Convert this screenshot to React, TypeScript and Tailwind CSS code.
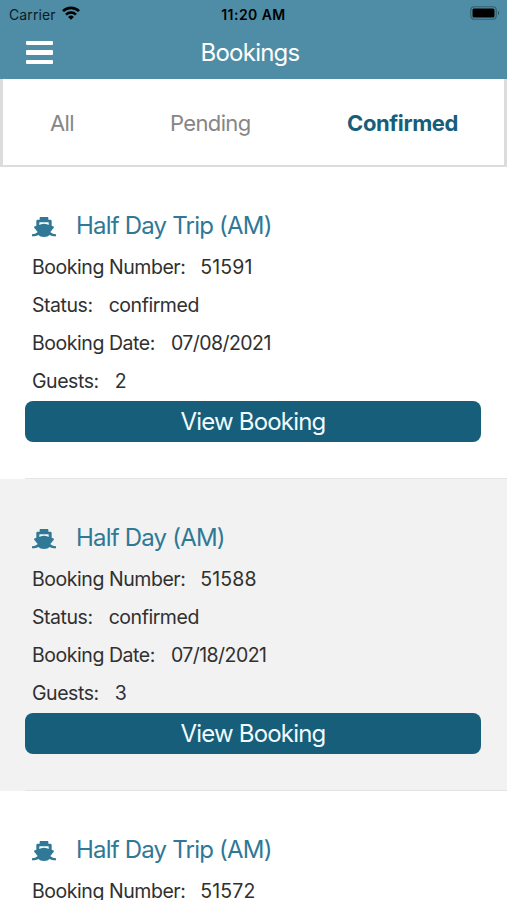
import clsx from "clsx";

interface Booking {
    title: string;
    number: string;
    status: string;
    date: string;
    guests: number;
}

const bookings: Booking[] = [
    {
        title: "Half Day Trip (AM)",
        number: "51591",
        status: "confirmed",
        date: "07/08/2021",
        guests: 2,
    },
    {
        title: "Half Day (AM)",
        number: "51588",
        status: "confirmed",
        date: "07/18/2021",
        guests: 3,
    },
    {
        title: "Half Day Trip (AM)",
        number: "51572",
        status: "confirmed",
        date: "07/18/2021",
        guests: 2,
    },
];

function ShipIcon() {
    return (
        <svg className="mt-[1.5px] h-[20px] w-[24px]" viewBox="0 0 72 60" fill="currentColor">
            {/* Funnel and cabin */}
            <path
                fillRule="evenodd"
                d="M25 0h22a2 2 0 0 1 2 2v6h6a4 4 0 0 1 4 4v18H13V12a4 4 0 0 1 4-4h6V2a2 2 0 0 1 2-2zM22 16v8l14-4 14 4v-8z"
            />
            {/* Hull and waves */}
            <path d="M36 20 63 27.500c3 1 3.500 3.500 1.800 5.500L55 45c3 3 8 6 17 7v6c-9 0-15-1.500-19-4-4 4-9 6-17 6s-13-2-17-6c-4 2.500-10 4-19 4v-6c9-1 14-4 17-7L7.200 33C5.500 31 6 28.500 9 27.500z" />
        </svg>
    );
}

function StatusBar() {
    return (
        <div className="grid h-7 grid-cols-[1fr_auto_1fr] items-center px-[9px] text-[14px] text-[#0b1a22]">
            <div className="flex items-center gap-[6px]">
                <span className="tracking-[0.1px]">Carrier</span>
                <svg
                    className="-mt-0.5 h-[14px] w-[18px]"
                    viewBox="0 0 18 14"
                    fill="none"
                    stroke="black"
                    strokeWidth="2.6"
                >
                    <path d="M1 5.2a11.3 11.3 0 0 1 16 0" />
                    <path d="M4 8.6a7.1 7.1 0 0 1 10 0" />
                    <path d="M9 13.8 6.1 10.9a4.1 4.1 0 0 1 5.8 0z" fill="black" stroke="none" />
                </svg>
            </div>
            <span className="font-semibold tracking-[0.45px] text-black">11:20 AM</span>
            <svg className="-mr-0.5 -mt-0.5 h-[14px] w-[30px] justify-self-end" viewBox="0 0 30 14">
                <rect x="0.75" y="0.75" width="25.5" height="12.5" rx="3.5" fill="none" stroke="#33606f" strokeWidth="1.2" />
                <rect x="2.5" y="2.5" width="22" height="9" rx="1.5" fill="black" />
                <path d="M28 5v4c1.6-.6 1.6-3.4 0-4z" fill="#2b5565" />
            </svg>
        </div>
    );
}

function Header() {
    return (
        <header className="h-[79px] bg-[#4f8da6]">
            <StatusBar />
            <div className="grid h-[49px] grid-cols-[1fr_auto_1fr] items-center pl-[26px] pr-[33px]">
                <button className="flex w-[27px] flex-col gap-[5px]" aria-label="Menu">
                    <span className="h-[4.5px] rounded-[1px] bg-white" />
                    <span className="h-[4.5px] rounded-[1px] bg-white" />
                    <span className="h-[4.5px] rounded-[1px] bg-white" />
                </button>
                <h1 className="text-[24px] tracking-[-0.75px] text-white">Bookings</h1>
            </div>
        </header>
    );
}

function Tabs() {
    return (
        <nav className="flex h-[88px] items-center border-x-[3px] border-b-2 border-[#dcdcdc] pl-[47px] pr-[46px] pt-0.5 text-[22px] text-[#868686]">
            <span className="w-[120px] tracking-[-0.6px]">All</span>
            <span className="tracking-[-0.65px]">Pending</span>
            <span className="ml-auto font-bold tracking-[-0.4px] text-[#165e79]">Confirmed</span>
        </nav>
    );
}

interface FieldProps {
    label: string;
    value: string | number;
    valueClass?: string;
}

function Field({ label, value, valueClass }: FieldProps) {
    return (
        <div className="flex h-[38.25px] items-center gap-4">
            <span>{label}:</span>
            <span className={valueClass}>{value}</span>
        </div>
    );
}

function BookingItem({ booking, shaded }: { booking: Booking; shaded: boolean }) {
    return (
        <li className={clsx("h-[312px] pl-[25px]", shaded ? "bg-[#f2f2f2]" : "bg-white")}>
            <div className="h-full border-b border-[#e4e4e4] pt-[38px] pr-[26px]">
                <div className="pl-[7px] text-[19.5px] tracking-[-0.45px] text-[#303030]">
                    <div className="mb-px flex h-[42px] items-center text-[#2f7896]">
                        <ShipIcon />
                        <h2 className="ml-5 text-[24px] tracking-[-0.8px]">{booking.title}</h2>
                    </div>
                    <Field
                        label="Booking Number"
                        value={booking.number}
                        valueClass="-ml-px tracking-[0.1px]"
                    />
                    <Field label="Status" value={booking.status} />
                    <Field
                        label="Booking Date"
                        value={booking.date}
                        valueClass="tracking-[-0.55px]"
                    />
                    <Field label="Guests" value={booking.guests} />
                </div>
                <button className="h-[41px] w-full rounded-[8px] bg-[#165e79] text-[24px] tracking-[-0.8px] text-[#f1fbff]">
                    View Booking
                </button>
            </div>
        </li>
    );
}

export default function App() {
    return (
        <div className="h-screen overflow-hidden bg-white font-['Inter',sans-serif]">
            <Header />
            <Tabs />
            <ul>
                {bookings.map((booking, index) => (
                    <BookingItem
                        key={booking.number}
                        booking={booking}
                        shaded={index % 2 === 1}
                    />
                ))}
            </ul>
        </div>
    );
}
